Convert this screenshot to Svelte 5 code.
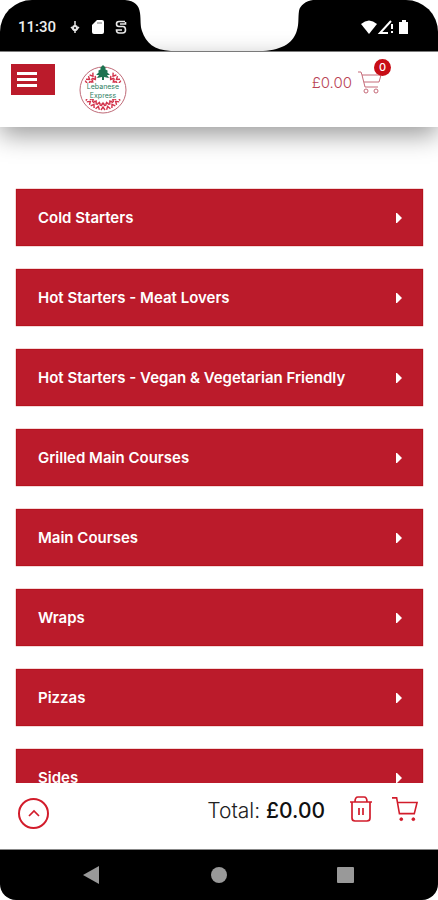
<script lang="ts">
  const categories = [
    "Cold Starters",
    "Hot Starters - Meat Lovers",
    "Hot Starters - Vegan & Vegetarian Friendly",
    "Grilled Main Courses",
    "Main Courses",
    "Wraps",
    "Pizzas",
    "Sides",
  ];

  // angles of the leaf pattern around the logo ring
  const topLeaves = [-68, -52, -36, 36, 52, 68];
  const bottomLeaves = [116, 132, 148, 164, 180, 196, 212, 228, 244];

  let total = $state(0);
  let count = $state(0);
  let opened: string | null = $state(null);
  let list: HTMLElement;

  let price = $derived("£" + total.toFixed(2));

  function toggle(name: string) {
    opened = opened === name ? null : name;
  }

  function clearBasket() {
    total = 0;
    count = 0;
  }
</script>

<div class="phone">
  <div class="status">
    <svg class="notch" viewBox="0 0 188 51" aria-hidden="true">
      <path
        fill="#fff"
        d="M0 0C10 1 14 5 15 13C16 20 15 25 17 31C21 43 29 50 46 51H138C158 50 169 42 172 30C174 24 173 18 174 11C175 5 181 1 188 0Z"
      />
    </svg>
    <span class="time">11:30</span>
    <svg class="status-icons" viewBox="0 0 60 16" aria-hidden="true">
      <g fill="none" stroke="#e8e8e8">
        <circle cx="5" cy="9" r="2" stroke-width="2" />
        <path d="M5 2V7M1 8L5 12L9 8M5 11V14" stroke-width="1.5" />
        <path
          d="M55 2.500H49Q46.500 2.500 46.500 5Q46.500 7.500 49 7.500H53Q55.500 7.500 55.500 11Q55.500 14 52.500 14H49Q46.500 14 46.500 11H52M50 5H55.500V3"
          stroke-width="1.6"
        />
      </g>
      <path fill="#fff" d="M27 1H32Q34 1 34 3V13Q34 15 32 15H24Q22 15 22 13V6Z" />
      <path stroke="#777" d="M27 4H32" />
    </svg>
    <svg class="signal" viewBox="0 0 50 16" aria-hidden="true">
      <path fill="#fff" d="M1 5Q9-2 17 5L9 15Z" />
      <path
        fill="none"
        stroke="#fff"
        stroke-width="2"
        d="M31 2L20 14H28M32 5V10M32 12V14"
      />
      <path fill="#fff" d="M39 3H42V1H46V3H48V15H39Z" />
    </svg>
  </div>

  <header>
    <button class="menu" aria-label="Menu">
      <span></span><span></span><span></span>
    </button>
    <a class="logo" href="#home" aria-label="Lebanese Express">
      <svg viewBox="0 0 50 50">
        <circle cx="25" cy="26" r="23" fill="#fff" stroke="#bf6b78" stroke-width="1" />
        <circle cx="25" cy="26" r="14" fill="none" stroke="#e9b9c0" stroke-width="1" />
        {#each [...topLeaves, ...bottomLeaves] as angle}
          <g transform="rotate({angle} 25 26)" fill="none" stroke="#d3324a">
            <path d="M23 6L25 9L27 6M23 10L25 13L27 10" stroke-width="1.4" />
          </g>
        {/each}
        <rect x="5" y="19" width="40" height="16" fill="#fff" />
        <path
          fill="#1c7350"
          d="M25 1L28 4L27 5L30 7L29 8L32 11L29 11L31 14L26 13V16H24V13L19 14L21 11L18 11L21 8L20 7L23 5L22 4Z"
        />
      </svg>
      <span class="name">Lebanese<br />Express</span>
    </a>
    <a class="basket" href="#basket">
      <span>{price}</span>
      <span class="cart">
        <svg viewBox="0 0 24 24" aria-hidden="true">
          <g fill="none" stroke="#c56a78" stroke-width="1">
            <path d="M0 2H3L4 5L7 17H20M4 5H23L21 12H6" />
            <circle cx="8" cy="21" r="2" />
            <circle cx="18" cy="21" r="2" />
          </g>
        </svg>
        <span class="badge">{count}</span>
      </span>
    </a>
  </header>

  <main bind:this={list}>
    {#each categories as name}
      <button
        class="category"
        aria-expanded={opened === name}
        onclick={() => toggle(name)}
      >
        <span>{name}</span>
        <svg class="caret" viewBox="0 0 6 10" aria-hidden="true">
          <path fill="#fff" d="M0 0H1L6 5L1 10H0Z" />
        </svg>
      </button>
    {/each}
  </main>

  <footer>
    <button
      class="up"
      aria-label="Back to top"
      onclick={() => list.scrollTo({ top: 0, behavior: "smooth" })}
    >
      <svg viewBox="0 0 12 8"><path d="M1 7L6 2L11 7" /></svg>
    </button>
    <p>Total: <strong>{price}</strong></p>
    <button class="action" aria-label="Empty basket" onclick={clearBasket}>
      <svg viewBox="0 0 26 28">
        <path d="M2 7H24M7 7Q7 2 10 2H16Q19 2 19 7M4 7V23Q4 26 7 26H19Q22 26 22 23V7" />
        <path d="M11 13V20M15 13V20" />
      </svg>
    </button>
    <button class="action" aria-label="Checkout">
      <svg viewBox="0 0 28 28">
        <path d="M0 2H5L8 19H24L27 7H6" />
        <circle cx="10" cy="25" r="1.500" />
        <circle cx="23" cy="25" r="1.500" />
      </svg>
    </button>
  </footer>

  <nav>
    <button aria-label="Back">
      <svg viewBox="0 0 18 18"><path d="M0 9L16 0V18Z" /></svg>
    </button>
    <button aria-label="Home">
      <svg viewBox="0 0 18 18"><circle cx="9" cy="9" r="8" /></svg>
    </button>
    <button aria-label="Recent apps">
      <svg viewBox="0 0 18 18"><rect x="0" y="1" width="17" height="16" rx="1" /></svg>
    </button>
  </nav>
</div>

<style>
  :global(body) {
    background: #fff;
  }

  .phone {
    display: flex;
    flex-direction: column;
    height: 100vh;
    font-family: Inter, "Open Sans", sans-serif;
  }

  button {
    padding: 0;
    border: none;
    background: none;
    font-family: inherit;
    cursor: pointer;
  }

  svg {
    display: block;
  }

  .status {
    position: relative;
    display: flex;
    align-items: center;
    flex-shrink: 0;
    box-sizing: border-box;
    height: 52px;
    padding: 2px 28px 0 18px;
    border-bottom: 1px solid #888;
    border-radius: 32px 32px 0 0;
    background: #000;
    color: #eee;
  }

  .notch {
    position: absolute;
    top: 0;
    left: 50%;
    width: 188px;
    height: 51px;
    transform: translateX(-50%);
  }

  .time {
    font: 500 15px Roboto, sans-serif;
  }

  .status-icons {
    width: 60px;
    height: 16px;
    margin-left: 14px;
  }

  .signal {
    width: 50px;
    height: 16px;
    margin-left: auto;
  }

  header {
    position: relative;
    z-index: 1;
    display: flex;
    align-items: flex-start;
    flex-shrink: 0;
    box-sizing: border-box;
    height: 75px;
    padding: 12px 56px 0 11px;
    background: #fff;
    box-shadow: 0 8px 24px rgba(0, 0, 0, 0.4);
  }

  .menu {
    display: flex;
    flex-direction: column;
    justify-content: center;
    gap: 3px;
    width: 44px;
    height: 31px;
    padding-left: 6px;
    background: #bb1b2b;
  }

  .menu span {
    width: 20px;
    height: 3px;
    background: #fff;
  }

  .logo {
    display: grid;
    width: 50px;
    margin-left: 23px;
    text-decoration: none;
  }

  .logo svg,
  .logo .name {
    grid-area: 1 / 1;
  }

  .logo .name {
    align-self: center;
    padding-top: 4px;
    color: #2c7d60;
    font-size: 7px;
    line-height: 9px;
    text-align: center;
  }

  .basket {
    display: flex;
    align-items: center;
    gap: 6px;
    margin: 6px 0 0 auto;
    color: #b94356;
    font-size: 15px;
    font-weight: 300;
    text-decoration: none;
  }

  .cart {
    position: relative;
  }

  .cart svg {
    width: 24px;
    height: 24px;
  }

  .badge {
    position: absolute;
    top: -11px;
    right: -9px;
    width: 17px;
    height: 17px;
    border-radius: 50%;
    background: #c80d16;
    color: #fff;
    font-size: 11px;
    font-weight: 500;
    line-height: 17px;
    text-align: center;
  }

  main {
    display: flex;
    flex: 1;
    flex-direction: column;
    gap: 23px;
    min-height: 0;
    padding: 62px 15px 0 16px;
    overflow: hidden;
  }

  .category {
    display: flex;
    align-items: center;
    justify-content: space-between;
    flex-shrink: 0;
    height: 57px;
    padding: 0 20px 0 21px;
    border: 1px solid #b5121d;
    background: #bb1b2b;
    box-shadow: 0 0 1px #b5121d;
    color: #fff;
    font-size: 15px;
    font-weight: 600;
    text-align: left;
  }

  .caret {
    width: 6px;
    height: 10px;
  }

  footer {
    display: flex;
    align-items: center;
    flex-shrink: 0;
    box-sizing: border-box;
    height: 67px;
    padding: 0 20px 14px 18px;
    border-bottom: 1px solid #888;
    background: #fff;
  }

  .up {
    display: flex;
    align-items: center;
    justify-content: center;
    width: 31px;
    height: 31px;
    margin-top: 8px;
    border: 2px solid #d21c2b;
    border-radius: 50%;
  }

  .up svg {
    width: 12px;
    height: 8px;
  }

  footer path {
    fill: none;
    stroke: #d21c2b;
    stroke-width: 1.7;
  }

  footer circle {
    fill: #d21c2b;
    stroke: #d21c2b;
  }

  footer p {
    margin: 2px 23px 0 auto;
    color: #222;
    font-size: 21px;
    font-weight: 300;
  }

  footer strong {
    color: #111;
    font-weight: 500;
  }

  .action svg {
    width: 26px;
    height: 28px;
  }

  .action + .action {
    margin-left: 18px;
  }

  nav {
    display: flex;
    align-items: center;
    justify-content: center;
    gap: 109px;
    flex-shrink: 0;
    height: 50px;
    border-radius: 0 0 16px 16px;
    background: #000;
  }

  nav svg {
    width: 18px;
    height: 18px;
    fill: #999;
  }
</style>
